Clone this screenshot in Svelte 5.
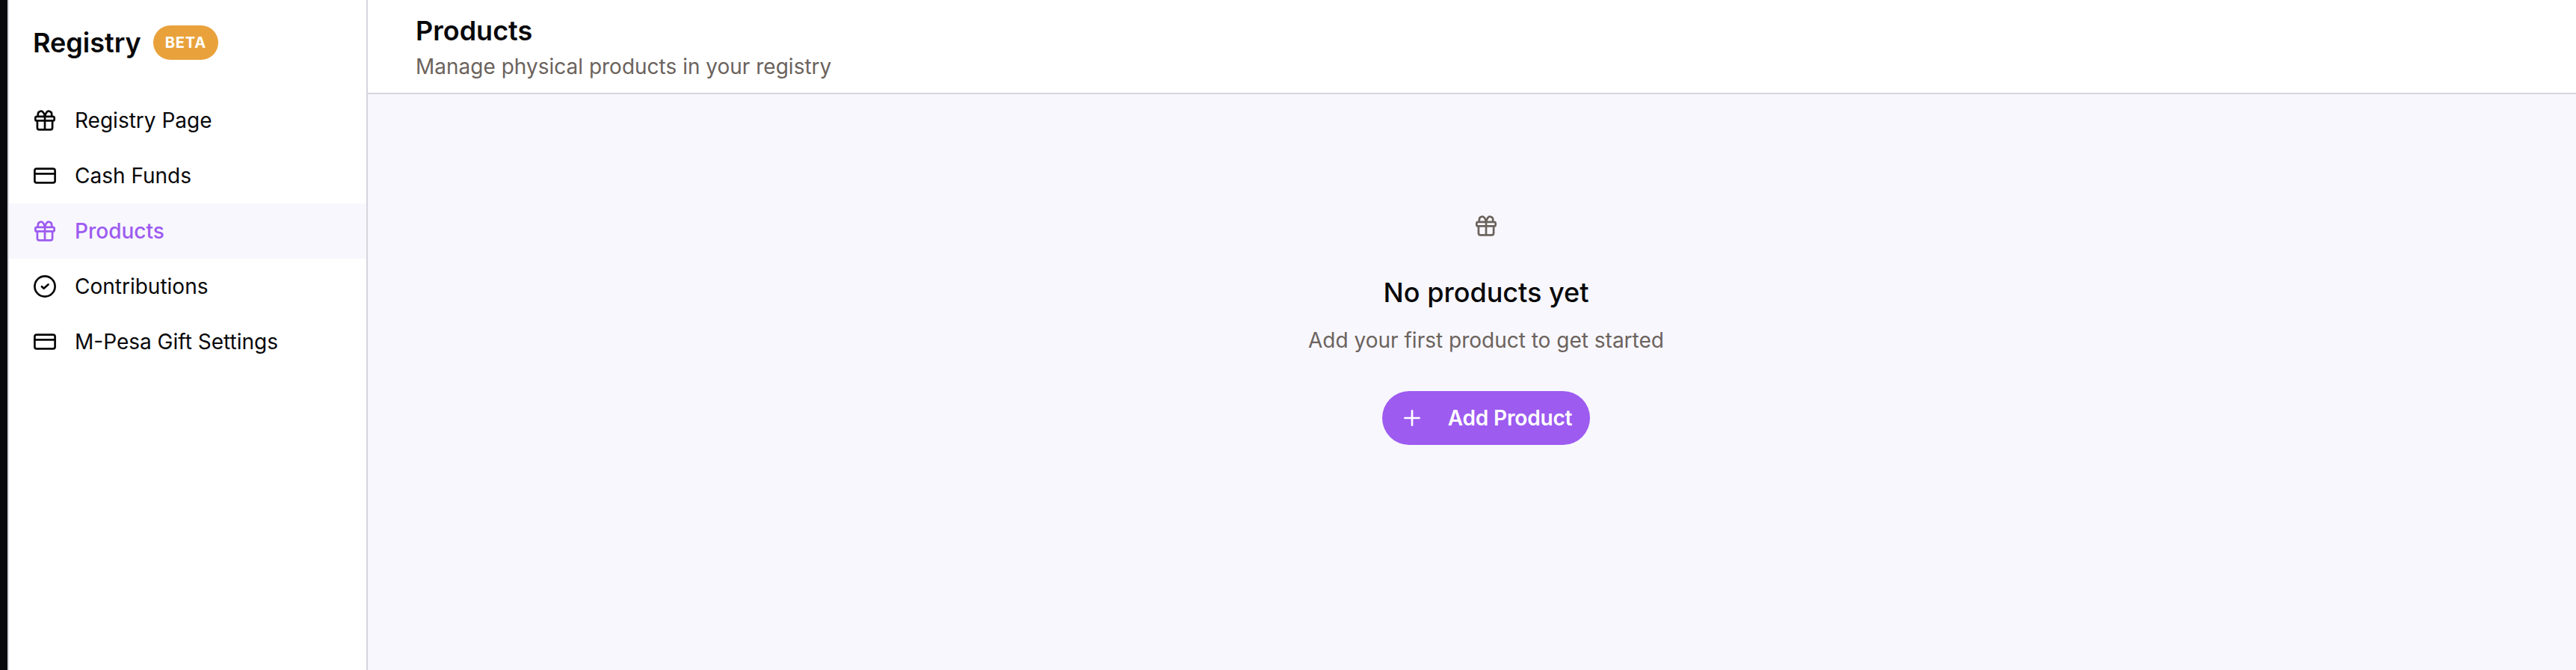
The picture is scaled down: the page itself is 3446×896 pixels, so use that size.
<script lang="ts">
  type IconName = "gift" | "card" | "check";

  const navItems: { label: string; icon: IconName }[] = [
    { label: "Registry Page", icon: "gift" },
    { label: "Cash Funds", icon: "card" },
    { label: "Products", icon: "gift" },
    { label: "Contributions", icon: "check" },
    { label: "M-Pesa Gift Settings", icon: "card" },
  ];

  let active = $state("Products");
</script>

{#snippet icon(name: IconName | "plus")}
  <svg class="icon" viewBox="0 0 20 20" aria-hidden="true">
    {#if name === "gift"}
      <rect x="3.65" y="7.4" width="12.7" height="2.8" rx="1" />
      <path d="M4.95 10.2v4.65a1.35 1.35 0 0 0 1.35 1.35h7.4a1.35 1.35 0 0 0 1.35-1.35V10.2M10 7.4v8.8" />
      <path d="M5.4 7.3V5.85a1.95 1.95 0 0 1 3.5-1.2Q9.8 5.8 10 7.3Q10.2 5.8 11.1 4.65A1.95 1.95 0 0 1 14.6 5.85V7.3" />
    {:else if name === "card"}
      <rect x="3.2" y="5.3" width="13.6" height="9.4" rx="1.3" />
      <path d="M3.2 8.65h13.6" />
    {:else if name === "check"}
      <circle cx="10" cy="10" r="6.8" />
      <path d="m7.95 10.15 1.35 1.25 2.95-2.65" />
    {:else}
      <path d="M10 5.2v9.6M5.2 10h9.6" />
    {/if}
  </svg>
{/snippet}

<div class="app">
  <aside class="sidebar">
    <div class="brand">
      <span class="brand-name">Registry</span>
      <span class="badge">BETA</span>
    </div>
    <nav>
      {#each navItems as item}
        <button class="nav-item" class:active={item.label === active} onclick={() => (active = item.label)}>
          {@render icon(item.icon)}
          <span>{item.label}</span>
        </button>
      {/each}
    </nav>
  </aside>

  <div class="main">
    <header class="header">
      <h1>Products</h1>
      <p>Manage physical products in your registry</p>
    </header>
    <section class="empty-state">
      {@render icon("gift")}
      <h2>No products yet</h2>
      <p>Add your first product to get started</p>
      <button class="add-button">
        {@render icon("plus")}
        <span>Add Product</span>
      </button>
    </section>
  </div>
</div>

<style>
  :global(body) {
    background: #f8f7fd;
  }

  .app {
    display: flex;
    height: 100vh;
    box-sizing: border-box;
    overflow: hidden;
    border-left: 10px solid #08080a;
    font-family: Inter, "Liberation Sans", sans-serif;
    font-size: 28px;
    line-height: 40px;
    color: #08080a;
  }

  h1,
  h2,
  p {
    margin: 0;
  }

  button {
    border: 0;
    font: inherit;
    cursor: pointer;
  }

  .icon {
    flex: none;
    width: 40px;
    height: 40px;
    fill: none;
    stroke: currentColor;
    stroke-width: 1.35;
    stroke-linecap: round;
    stroke-linejoin: round;
  }

  .sidebar {
    flex: none;
    width: 482px;
    box-sizing: border-box;
    background: #fff;
    border-left: 2px solid #d6d5df;
    border-right: 2px solid #d6d5df;
  }

  .brand {
    display: flex;
    align-items: center;
    gap: 16px;
    height: 46px;
    padding: 34px 32px 44px;
  }

  .brand-name {
    font-size: 36px;
    font-weight: 600;
  }

  .badge {
    display: flex;
    align-items: center;
    height: 46px;
    padding: 0 16px;
    border-radius: 23px;
    background: #e9a23b;
    color: #fff;
    font-size: 20px;
    font-weight: 700;
    letter-spacing: 0.85px;
  }

  .nav-item {
    display: flex;
    align-items: center;
    gap: 20px;
    width: 100%;
    height: 74px;
    padding: 0 28px;
    background: transparent;
    color: inherit;
    text-align: left;
  }

  .nav-item.active {
    background: #f8f7fd;
    color: #9d5bf0;
    font-weight: 500;
  }

  .main {
    flex: 1;
    min-width: 0;
    background: #f8f7fd;
  }

  .header {
    height: 124px;
    padding: 0 64px;
    background: #fff;
    border-bottom: 2px solid #d6d5df;
  }

  .header h1 {
    padding-top: 17px;
    font-size: 36px;
    font-weight: 600;
    line-height: 48px;
  }

  .header p,
  .empty-state p {
    color: #6b635d;
  }

  .header p {
    padding-top: 4px;
  }

  .empty-state {
    display: flex;
    flex-direction: column;
    align-items: center;
    padding: 156px 0 0 38px;
  }

  .empty-state > .icon {
    color: #6b635d;
  }

  .empty-state h2 {
    margin-top: 45px;
    font-size: 36px;
    font-weight: 500;
    line-height: 48px;
  }

  .empty-state p {
    margin-top: 20px;
  }

  .add-button {
    display: flex;
    align-items: center;
    gap: 28px;
    height: 72px;
    margin-top: 48px;
    padding: 0 24px 0 20px;
    border-radius: 36px;
    background: #9d5bf0;
    color: #fff;
    font-weight: 600;
    letter-spacing: -0.15px;
  }
</style>
